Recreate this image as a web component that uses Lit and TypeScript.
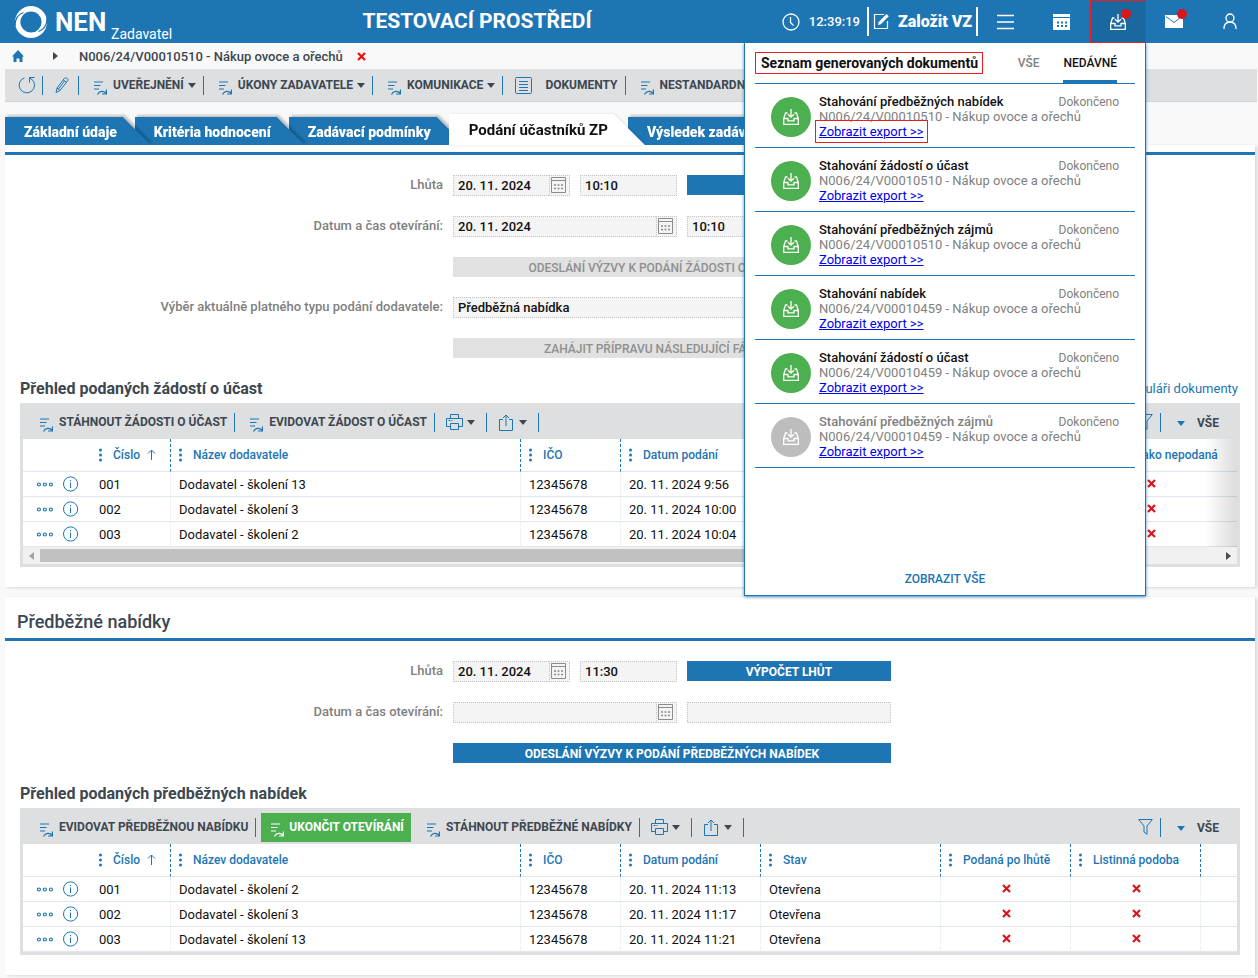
import { LitElement, html, css, svg, nothing, TemplateResult } from "lit";
import { customElement, property } from "lit/decorators.js";
import { classMap } from "lit/directives/class-map.js";

const icon = (w: number, h: number, body: unknown, cls = "") =>
  html`<svg class="ico ${cls}" width=${w} height=${h} viewBox="0 0 ${w} ${h}" fill="none" stroke="currentColor" aria-hidden="true">${body}</svg>`;

const icons = {
  logo: () => icon(34, 34, svg`
    <circle cx="17" cy="17" r="13.300" stroke-width="5.400"/>
    <path stroke="#1d75b4" stroke-width="1.200" d="M1 21C1 14 4.500 9 9.500 7.500M33 13C33 20 29.500 25 24.500 26.500"/>`),
  clock: () => icon(18, 18, svg`<circle cx="9" cy="9" r="8" stroke-width="1.300"/><path stroke-width="1.300" d="M8.500 4v5.500l3 3"/>`),
  edit: () => icon(17, 17, svg`<path stroke-width="1.200" d="M11 1.500H1.500v14h13V8"/><path fill="currentColor" stroke="none" d="M5 12l.7-3 7.800-8 2.300 2.200-8 8z"/>`),
  menu: () => icon(18, 16, svg`<path stroke-width="1.600" d="M0 1.500h17M0 8h17M0 14.500h17"/>`),
  calendarSolid: () => icon(18, 16, svg`<path fill="currentColor" stroke="none" d="M0 0h17v3H0zM0 4h17v12H0z"/><path stroke="#1d75b4" stroke-width="2" stroke-dasharray="2 2" d="M4 8.500h10M4 12h10"/>`),
  inbox: () => icon(16, 16, svg`<path stroke-width="1.300" d="M4.500 4H2.500L.7 9.500v5.800h14.600V9.500L13.500 4h-2"/><path stroke-width="1.300" d="M.7 9.500H5v2.300h6V9.500h4.300M8 0v8M5 5.200l3 3 3-3"/>`),
  mail: () => icon(18, 13, svg`<path fill="currentColor" stroke="none" d="M0 0h18v13H0z"/><path stroke="#1d75b4" d="M1 1.500l8 6 8-6"/>`),
  user: () => icon(14, 17, svg`<circle cx="7" cy="5" r="4" stroke-width="1.300"/><path stroke-width="1.300" d="M1 16c0-4.500 2.500-7 6-7s6 2.500 6 7"/>`),
  home: () => icon(12, 12, svg`<path fill="currentColor" stroke="none" d="M6 0l6 6.500h-1.500V12H7.500V8.500h-3V12H1.500V6.500H0z"/>`),
  right: () => icon(5, 8, svg`<path fill="currentColor" stroke="none" d="M0 0l5 4-5 4z"/>`),
  left: () => icon(5, 8, svg`<path fill="currentColor" stroke="none" d="M5 0L0 4l5 4z"/>`),
  cross: () => icon(9, 9, svg`<path stroke-width="2.200" d="M1 1l7 7M8 1L1 8"/>`),
  refresh: () => icon(18, 18, svg`<path d="M6.500 1.800A7.700 7.700 0 1 0 13.500 3"/><path d="M16.500 1.500h-5v5M11.500 1.500l2.500 2.500"/>`),
  pencil: () => icon(14, 18, svg`<path d="M1 16.500l1-4.500L9.500 2.200c1-1.300 4.200.6 3.300 2.300L5 14.500zM2 12l3 2.500M8.200 3.800l3.200 2.400M9.500 5l-6 8"/>`),
  caret: () => icon(8, 5, svg`<path fill="currentColor" stroke="none" d="M0 0h8L4 5z"/>`),
  action: () => icon(14, 14, svg`<path stroke-width="1.200" d="M1 1h9M1 4.500h6.500M1 8h5M4.500 13.500c2-4 6-4 8.500-1.500M13.400 8.500V13H9"/>`),
  doc: () => icon(17, 17, svg`<rect x=".5" y=".5" width="16" height="16" rx="1"/><path d="M4 4.500h9M4 7.500h9M4 10.500h9M4 13.500h9"/>`),
  printer: () => icon(17, 16, svg`<path d="M4.500 4.500v-4h8v4M4.500 12.500h-4v-8h16v8h-4M4.500 9.500h8v6h-8zM2.500 6.500h2M5.500 6.500h1"/>`),
  share: () => icon(14, 17, svg`<path d="M4 5.500H.5v11h13v-11H10M7 12V1M4 4l3-3 3 3"/>`),
  funnel: () => icon(15, 16, svg`<path d="M.7.500h13.600L9 7v8.300L6 13V7z"/>`),
  calendar: () => icon(15, 16, svg`<path d="M.5.500h14v15H.5zM.5 3.500h14"/><path stroke-width="1.500" stroke-dasharray="2 1.500" d="M3 8h9M3 11.500h9"/>`),
  kebab: () => icon(4, 14, svg`<g fill="currentColor" stroke="none"><circle cx="2.500" cy="2" r="1.500"/><circle cx="2.500" cy="7" r="1.500"/><circle cx="2.500" cy="12" r="1.500"/></g>`),
  up: () => icon(9, 11, svg`<path d="M4.500 11V1M1 4.500L4.500 1 8 4.500"/>`),
  more: () => icon(17, 5, svg`<g stroke-width="1.200"><circle cx="2.900" cy="2.500" r="1.500"/><circle cx="8.900" cy="2.500" r="1.500"/><circle cx="14.900" cy="2.500" r="1.500"/></g>`),
  info: () => icon(16, 16, svg`<circle cx="7.600" cy="8" r="7.100"/><path d="M7.500 6.500v5.500M7.500 4v1.200"/>`),
};

const shared = css`
  * { box-sizing: border-box; }
  button { font: inherit; color: inherit; background: none; border: 0; padding: 0; margin: 0; cursor: pointer; }
  a { color: inherit; text-decoration: none; }
  .ico { display: block; flex: none; }
`;

const toolbarStyles = css`
  .bar { display: flex; align-items: center; background: #dedfe1; color: #3c4750; font-size: 12px; font-weight: 700; white-space: nowrap; }
  .bar .tool { display: flex; align-items: center; height: 29px; color: #3c4750; }
  .bar .tool .ico { color: #1d75b4; }
  .bar .tool .dark .ico { color: #3c4750; }
  .bar .sep { flex: none; width: 1px; height: 19px; background: #1d75b4; }
  .act { gap: 6px; padding: 0 7px 0 14px; }
  .act .ico { align-self: flex-end; margin-bottom: 5px; }
  .act .dark .ico { margin: 0; }
  .dark { display: flex; }
  .act .dark { margin-left: -2px; }
`;

type Row = string[];
interface Col { label: string; width?: number; sort?: boolean; flag?: boolean }

@customElement("data-grid")
export class DataGrid extends LitElement {
  @property({ attribute: false }) columns: Col[] = [];
  @property({ attribute: false }) rows: Row[] = [];
  @property({ attribute: false }) actions: { label: string; primary?: boolean }[] = [];
  @property({ type: Boolean }) scrolls = false;

  static styles = [shared, toolbarStyles, css`
    :host { display: block; background: #dedfe1; padding: 0 3px 3px; }
    .bar { height: 36px; padding: 2px 18px 0 2px; }
    .wide { gap: 4px; padding: 0 11px; }
    .export { gap: 6px; padding: 0 11px 0 12px; }
    .primary.tool { background: #4caf50; color: #fff; margin: 0 1px 0 5px; padding: 0 7px 0 9px; gap: 5px; }
    .primary.tool .ico { color: #fff; }
    .end { display: flex; align-items: center; margin-left: auto; }
    .funnel { padding-right: 7px; }
    .bar .view { gap: 12px; padding: 2px 0 0 16px; }
    .frame { position: relative; overflow: hidden; background: #fff; }
    table { width: 100%; border-collapse: separate; border-spacing: 0; table-layout: fixed; font-size: 13px; color: #111; }
    .scrolls table { min-width: 1218px; }
    th { height: 33px; padding: 0 0 1px 7px; text-align: left; font-size: 12px; font-weight: 500; color: #1d75b4; border-bottom: 1px solid #dfe7ec; border-right: 1px dashed #1d75b4; white-space: nowrap; }
    td { height: 25px; padding: 0 0 0 8px; border-bottom: 1px solid #dfe7ec; border-right: 1px dotted #dfe7ec; white-space: nowrap; }
    th:last-child, td:last-child { border-right: 0; }
    th:first-child { padding-left: 75px; }
    td:first-child { padding-left: 13px; }
    .head { display: flex; align-items: center; gap: 11px; }
    .head .up { margin-left: -4px; }
    .lead { display: flex; align-items: center; }
    .lead button { color: #1d75b4; }
    .lead .info { margin: 0 20px 0 10px; }
    td.flag { color: #d8161b; padding: 0 0 2px 1px; }
    .flag .ico { margin: 0 auto; }
    .fade { position: absolute; top: 0; right: 0; bottom: 0; width: 32px; background: linear-gradient(to right, rgba(0,0,0,0), rgba(0,0,0,.14)); pointer-events: none; }
    .scroll { display: flex; align-items: center; gap: 6px; height: 17px; padding: 0 6px; background: #f1f1f1; color: #4a4a4a; }
    .scroll .prev { color: #a3a3a3; }
    .track { flex: 1; height: 13px; }
    .thumb { width: 90%; height: 13px; background: #c1c1c1; }
  `];

  render() {
    return html`
      <div class="bar">
        ${this.actions.map(a => html`
            <button class=${classMap({ tool: true, act: true, primary: !!a.primary })}>${icons.action()}<span class="text">${a.label}</span></button>
            ${a.primary ? nothing : html`<span class="sep"></span>`}`)}
        <button class="tool wide" aria-label="Tisk">${icons.printer()}<span class="dark">${icons.caret()}</span></button><span class="sep"></span>
        <button class="tool export" aria-label="Export">${icons.share()}<span class="dark">${icons.caret()}</span></button><span class="sep"></span>
        <div class="end">
          <button class="tool funnel" aria-label="Filtr">${icons.funnel()}</button><span class="sep"></span>
          <button class="tool view">${icons.caret()}VŠE</button>
        </div>
      </div>
      <div class=${classMap({ frame: true, scrolls: this.scrolls })}>
        <table>
          <colgroup>${this.columns.map(c => html`<col style=${c.width ? `width:${c.width}px` : ""}>`)}</colgroup>
          <thead><tr>${this.columns.map(c => html`<th scope="col">${c.label
            ? html`<span class="head">${icons.kebab()}${c.label}${c.sort ? html`<span class="up">${icons.up()}</span>` : nothing}</span>`
            : nothing}</th>`)}</tr></thead>
          <tbody>${this.rows.map(r => html`<tr>${this.columns.map((c, i) => this.cell(c, r[i], i))}</tr>`)}</tbody>
        </table>
        ${this.scrolls ? html`<div class="fade"></div>` : nothing}
      </div>
      ${this.scrolls ? html`<div class="scroll"><span class="prev">${icons.left()}</span><div class="track"><div class="thumb"></div></div>${icons.right()}</div>` : nothing}
    `;
  }

  private cell(c: Col, value: string, i: number): TemplateResult {
    if (i === 0) {
      return html`<td><span class="lead"><button aria-label="Další">${icons.more()}</button><button class="info" aria-label="Detail">${icons.info()}</button>${value}</span></td>`;
    }
    if (c.flag) return html`<td class="flag">${icons.cross()}</td>`;
    return html`<td>${value ?? ""}</td>`;
  }
}

const documents = [
  ["Stahování předběžných nabídek", "N006/24/V00010510 - Nákup ovoce a ořechů"],
  ["Stahování žádostí o účast", "N006/24/V00010510 - Nákup ovoce a ořechů"],
  ["Stahování předběžných zájmů", "N006/24/V00010510 - Nákup ovoce a ořechů"],
  ["Stahování nabídek", "N006/24/V00010459 - Nákup ovoce a ořechů"],
  ["Stahování žádostí o účast", "N006/24/V00010459 - Nákup ovoce a ořechů"],
  ["Stahování předběžných zájmů", "N006/24/V00010459 - Nákup ovoce a ořechů"],
];

@customElement("document-panel")
export class DocumentPanel extends LitElement {
  static styles = [shared, css`
    :host { display: flex; flex-direction: column; width: 402px; min-height: 553px; padding: 9px 10px; background: #fff; color: #111; border: 1px solid #1d75b4; border-top: 0; box-shadow: 0 1px 3px rgba(29,117,180,.8); text-align: left; }
    .top { display: flex; align-items: flex-start; border-bottom: 1px solid #1d75b4; height: 32px; padding-right: 18px; }
    h2 { margin: 0 auto 0 0; padding: 0 4px 0 5px; font-size: 14px; line-height: 20px; font-weight: 700; border: 1px solid #ed1c24; white-space: nowrap; }
    .tab { height: 31px; padding-bottom: 9px; font-size: 12px; font-weight: 500; color: #808080; margin-left: 24px; }
    .tab.on { color: #111; border-bottom: 3px solid #1d75b4; padding-bottom: 6px; }
    ul { list-style: none; margin: 0; padding: 0; }
    li { display: flex; align-items: center; height: 64px; padding: 2px 16px 0; border-bottom: 1px solid #1d75b4; font-size: 13px; line-height: 15px; }
    .badge { display: flex; align-items: center; justify-content: center; width: 40px; height: 40px; border-radius: 50%; background: #4caf50; color: #fff; margin-right: 8px; }
    .info { flex: 1; color: #808080; }
    .line { display: flex; justify-content: space-between; align-items: baseline; height: 15px; }
    .name { font-weight: 500; color: #111; }
    .status { font-size: 12px; }
    .old .badge { background: #bdbdbd; }
    .old .name { color: #808080; }
    .info a { color: #0000ee; text-decoration: underline; }
    .info .boxed { outline: 1px solid #ed1c24; outline-offset: 3px; }
    .all { align-self: center; margin-top: auto; font-size: 12px; font-weight: 500; color: #1d75b4; }
  `];

  render() {
    return html`
      <div class="top"><h2>Seznam generovaných dokumentů</h2><button class="tab">VŠE</button><button class="tab on">NEDÁVNÉ</button></div>
      <ul>${documents.map(([name, file], i) => html`
        <li class=${classMap({ old: i === documents.length - 1 })}>
          <span class="badge">${icons.inbox()}</span>
          <div class="info">
            <div class="line"><span class="name">${name}</span><span class="status">Dokončeno</span></div>
            <div>${file}</div>
            <a href="#" class=${classMap({ boxed: i === 0 })}>Zobrazit export &gt;&gt;</a>
          </div>
        </li>`)}
      </ul>
      <a class="all" href="#">ZOBRAZIT VŠE</a>
    `;
  }
}

@customElement("app-root")
export class AppRoot extends LitElement {
  static styles = [shared, toolbarStyles, css`
    :host { display: block; min-height: 100vh; padding-bottom: 3px; background: #f9f9f9; font-family: Roboto, "Liberation Sans", sans-serif; font-size: 13px; color: #3c4750; overflow: hidden; }
    header { display: flex; height: 43px; background: #1d75b4; color: #fff; }
    .brand { display: flex; align-items: center; padding-left: 14px; white-space: nowrap; }
    .name { margin-left: 7px; font-size: 26px; font-weight: 700; width: 56px; }
    .role { align-self: flex-end; font-size: 14px; line-height: 18px; }
    h1 { flex: 1; margin: 0; text-align: center; font-size: 21px; line-height: 43px; font-weight: 700; white-space: nowrap; }
    .time { display: flex; align-items: center; gap: 9px; padding-right: 7px; font-weight: 500; }
    .create { display: flex; align-items: center; gap: 8px; align-self: center; height: 29px; padding: 0 4px; border: solid #fff; border-width: 0 2px; font-size: 16px; font-weight: 900; white-space: nowrap; }
    nav { display: flex; position: relative; z-index: 10; }
    .cell { position: relative; display: flex; align-items: center; justify-content: center; width: 56px; height: 43px; }
    .slot { position: relative; }
    .cell.open { background: #19689f; outline: 1px solid #ed1c24; outline-offset: -1px; }
    .dot { position: absolute; top: 9px; left: 31px; width: 10px; height: 10px; border-radius: 50%; background: #d8161b; }
    document-panel { position: absolute; top: 43px; right: 0; }
    .crumbs { display: flex; align-items: center; height: 26px; padding-left: 12px; font-weight: 500; }
    .home { color: #1d75b4; }
    .step { margin: 0 21px 0 29px; }
    .close { color: #ed1010; margin-left: 14px; }
    .main { height: 33px; margin: 0 1px 0 5px; padding-left: 5px; border-bottom: 1px solid #d2d3d5; overflow: hidden; }
    .pad { padding: 0 6px 0 8px; }
    .pencil { padding: 0 9px 0 12px; }
    .docs { gap: 13px; padding: 0 7px 0 12px; }
    .tabs { display: flex; align-items: flex-end; list-style: none; margin: 13px 0 0; padding: 0 0 0 5px; height: 30px; }
    .tabs li { position: relative; margin-right: -16px; filter: drop-shadow(2px -2px 1px rgba(0,0,0,.22)); }
    .tabs .on { margin-right: -17px; z-index: 6; filter: drop-shadow(1px 0 1px rgba(0,0,0,.12)); }
    .t1 { z-index: 5; } .t2 { z-index: 4; } .t3 { z-index: 3; } .t5 { z-index: 1; }
    .tabs button { display: block; height: 28px; padding: 2px 34px 0 19px; background: #1d75b4; color: #fff; font-size: 14px; font-weight: 900; white-space: nowrap; clip-path: polygon(0 0, calc(100% - 28px) 0, 100% 100%, 0 100%); }
    .tabs .on button { height: 31px; padding: 0 37px 0 20px; background: #fff; color: #111; font-size: 15px; font-weight: 700; clip-path: polygon(0 0, calc(100% - 31px) 0, 100% 100%, 0 100%); }
    section { margin: 0 3px 10px 5px; padding-bottom: 20px; background: #fff; box-shadow: 2px 1px 3px rgba(0,0,0,.14); }
    .first { padding-top: 7px; }
    .rule { height: 3px; background: #1d75b4; }
    .second { margin-bottom: 0; }
    .second h2 { margin: 0; padding: 7px 12px 0; height: 41px; line-height: 36px; font-size: 18px; font-weight: 500; }
    form { display: grid; grid-template-columns: repeat(2, minmax(0, 438px)); column-gap: 10px; row-gap: 20px; padding: 20px 0 15px; }
    form > label { text-align: right; color: #808080; font-weight: 500; line-height: 19px; }
    .fields { grid-column: 2; display: flex; gap: 10px; }
    .date { display: flex; flex: none; width: 117px; position: relative; }
    .date.wide { width: 224px; }
    .grow { flex: 1; }
    input { width: 100%; min-width: 0; height: 21px; padding: 0 4px; border: 1px dotted #c4c4c4; border-radius: 0; background: #f4f4f4; font: 500 13px Roboto, "Liberation Sans", sans-serif; color: #111; outline: 0; }
    .fields > input { width: 0; }
    .fields > input.time-in { flex: none; width: 97px; }
    .date input { border-right: 0; }
    .date button { flex: none; width: 21px; height: 21px; padding: 0 2px 1px 0; display: grid; place-items: center; background: #f4f4f4; border: 1px dotted #c4c4c4; color: #8c8c8c; }
    .cta { flex: 1; height: 20px; padding-top: 1px; background: #1d75b4; color: #fff; font-size: 12px; font-weight: 700; white-space: nowrap; overflow: hidden; }
    .cta:disabled { background: #e1e1e1; color: #8f8f8f; font-weight: 500; }
    .caption { display: flex; justify-content: space-between; align-items: center; height: 30px; padding: 0 17px 0 15px; }
    .caption h3 { margin: 0; font-size: 16px; font-weight: 700; }
    .caption a { color: #1d75b4; }
    data-grid { margin: 0 15px; }
  `];

  private date(id: string, value: string, wide = false) {
    return html`<div class=${classMap({ date: true, wide })}><input id=${id} .value=${value} readonly><button type="button" aria-label="Vybrat datum">${icons.calendar()}</button></div>`;
  }

  private menu(label: string) {
    return html`<button class="tool act">${icons.action()}<span class="text">${label}</span><span class="dark">${icons.caret()}</span></button><span class="sep"></span>`;
  }

  render() {
    const base: Col[] = [
      { label: "Číslo", width: 148, sort: true },
      { label: "Název dodavatele", width: 350 },
      { label: "IČO", width: 100 },
      { label: "Datum podání", width: 140 },
    ];
    return html`
      <header>
        <div class="brand">${icons.logo()}<span class="name">NEN</span><span class="role">Zadavatel</span></div>
        <h1>TESTOVACÍ PROSTŘEDÍ</h1>
        <div class="time">${icons.clock()}<span>12:39:19</span></div>
        <button class="create">${icons.edit()}Založit VZ</button>
        <nav>
          <button class="cell" aria-label="Menu">${icons.menu()}</button>
          <button class="cell" aria-label="Kalendář">${icons.calendarSolid()}</button>
          <div class="slot">
            <button class="cell open" aria-label="Dokumenty">${icons.inbox()}<span class="dot"></span></button>
            <document-panel></document-panel>
          </div>
          <button class="cell" aria-label="Zprávy">${icons.mail()}<span class="dot"></span></button>
          <button class="cell" aria-label="Uživatel">${icons.user()}</button>
        </nav>
      </header>

      <div class="crumbs">
        <a class="home" href="#" aria-label="Domů">${icons.home()}</a><span class="step">${icons.right()}</span>
        <span>N006/24/V00010510 - Nákup ovoce a ořechů</span>
        <button class="close" aria-label="Zavřít">${icons.cross()}</button>
      </div>

      <div class="bar main">
        <button class="tool pad" aria-label="Obnovit">${icons.refresh()}</button><span class="sep"></span>
        <button class="tool pencil" aria-label="Upravit">${icons.pencil()}</button><span class="sep"></span>
        ${this.menu("UVEŘEJNĚNÍ")}
        ${this.menu("ÚKONY ZADAVATELE")}
        ${this.menu("KOMUNIKACE")}
        <button class="tool docs">${icons.doc()}<span>DOKUMENTY</span></button><span class="sep"></span>
        ${this.menu("NESTANDARDNÍ")}
      </div>

      <ul class="tabs">
        <li class="t1"><button>Základní údaje</button></li>
        <li class="t2"><button>Kritéria hodnocení</button></li>
        <li class="t3"><button>Zadávací podmínky</button></li>
        <li class="on"><button>Podání účastníků ZP</button></li>
        <li class="t5"><button>Výsledek zadávání</button></li>
      </ul>

      <section class="first">
        <div class="rule"></div>
        <form>
          <label for="a1">Lhůta</label>
          <div class="fields">${this.date("a1", "20. 11. 2024")}<input class="time-in" aria-label="Čas lhůty" value="10:10" readonly><button type="button" class="cta">VÝPOČET LHŮT</button></div>
          <label for="a2">Datum a čas otevírání:</label>
          <div class="fields">${this.date("a2", "20. 11. 2024", true)}<input class="grow" aria-label="Čas otevírání" value="10:10" readonly></div>
          <div class="fields"><button type="button" class="cta" disabled>ODESLÁNÍ VÝZVY K PODÁNÍ ŽÁDOSTI O ÚČAST V ZP</button></div>
          <label for="a3">Výběr aktuálně platného typu podání dodavatele:</label>
          <div class="fields"><input id="a3" class="grow" value="Předběžná nabídka" readonly></div>
          <div class="fields"><button type="button" class="cta" disabled>ZAHÁJIT PŘÍPRAVU NÁSLEDUJÍCÍ FÁZE ŘÍZENÍ</button></div>
        </form>
        <div class="caption"><h3>Přehled podaných žádostí o účast</h3><a href="#">Zobrazit na formuláři dokumenty</a></div>
        <data-grid scrolls
          .actions=${[{ label: "STÁHNOUT ŽÁDOSTI O ÚČAST" }, { label: "EVIDOVAT ŽÁDOST O ÚČAST" }]}
          .columns=${[...base, { label: "Stav", width: 170 }, { label: "Podaná po lhůtě", width: 130, flag: true }, { label: "Označena jako nepodaná", width: 180, flag: true }]}
          .rows=${[
            ["001", "Dodavatel - školení 13", "12345678", "20. 11. 2024 9:56", "Podaná"],
            ["002", "Dodavatel - školení 3", "12345678", "20. 11. 2024 10:00", "Podaná"],
            ["003", "Dodavatel - školení 2", "12345678", "20. 11. 2024 10:04", "Podaná"],
          ]}></data-grid>
      </section>

      <section class="second">
        <h2>Předběžné nabídky</h2>
        <div class="rule"></div>
        <form>
          <label for="b1">Lhůta</label>
          <div class="fields">${this.date("b1", "20. 11. 2024")}<input class="time-in" aria-label="Čas lhůty" value="11:30" readonly><button type="button" class="cta">VÝPOČET LHŮT</button></div>
          <label for="b2">Datum a čas otevírání:</label>
          <div class="fields">${this.date("b2", "", true)}<input class="grow" aria-label="Čas otevírání" readonly></div>
          <div class="fields"><button type="button" class="cta">ODESLÁNÍ VÝZVY K PODÁNÍ PŘEDBĚŽNÝCH NABÍDEK</button></div>
        </form>
        <div class="caption"><h3>Přehled podaných předběžných nabídek</h3></div>
        <data-grid
          .actions=${[{ label: "EVIDOVAT PŘEDBĚŽNOU NABÍDKU" }, { label: "UKONČIT OTEVÍRÁNÍ", primary: true }, { label: "STÁHNOUT PŘEDBĚŽNÉ NABÍDKY" }]}
          .columns=${[...base, { label: "Stav", width: 180 }, { label: "Podaná po lhůtě", width: 130, flag: true }, { label: "Listinná podoba", width: 130, flag: true }, { label: "" }]}
          .rows=${[
            ["001", "Dodavatel - školení 2", "12345678", "20. 11. 2024 11:13", "Otevřena"],
            ["002", "Dodavatel - školení 3", "12345678", "20. 11. 2024 11:17", "Otevřena"],
            ["003", "Dodavatel - školení 13", "12345678", "20. 11. 2024 11:21", "Otevřena"],
          ]}></data-grid>
      </section>
    `;
  }
}
